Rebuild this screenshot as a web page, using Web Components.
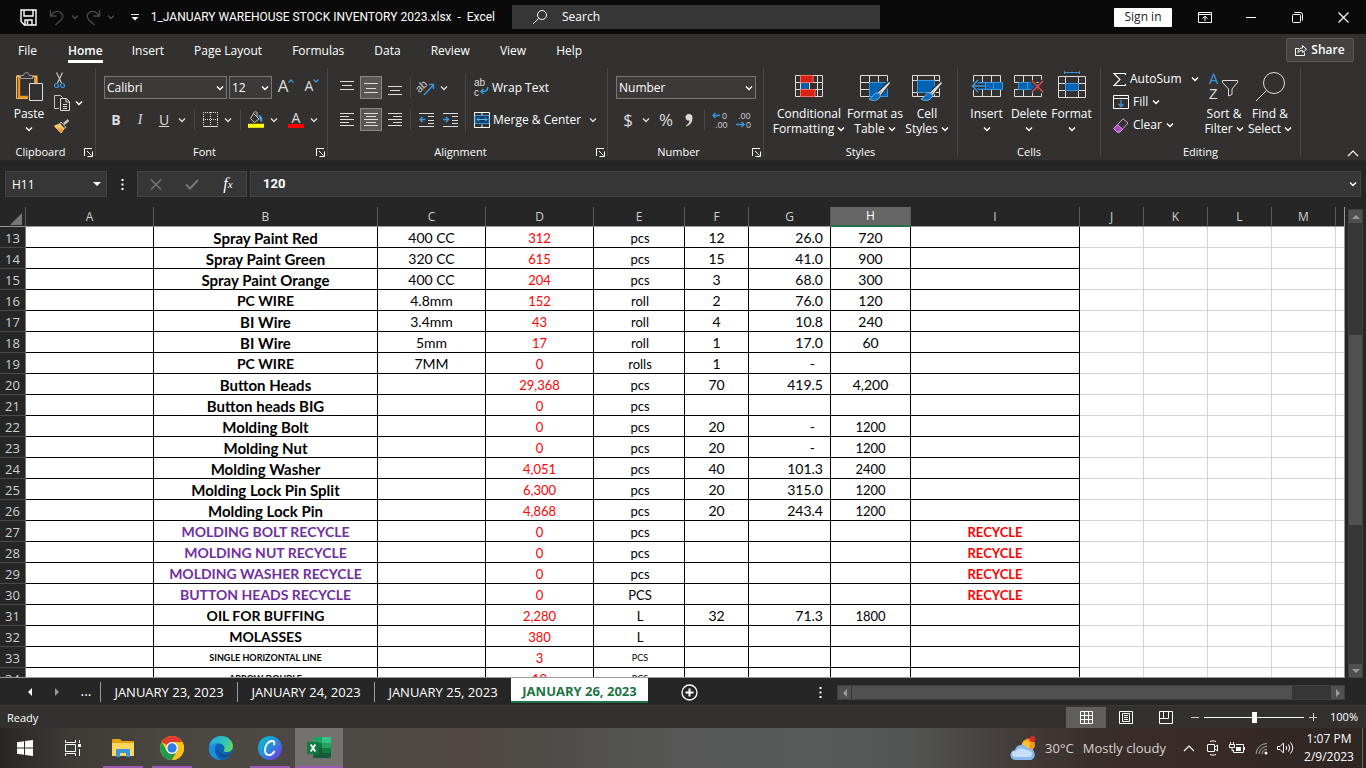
<!DOCTYPE html>
<html lang="en">
<head>
<meta charset="utf-8">
<title>1_JANUARY WAREHOUSE STOCK INVENTORY 2023.xlsx - Excel</title>
<style>
    html, body { margin: 0; height: 100%; }
    body {
        background: #262626;
        color: #fff;
        font: 12px/16px "Open Sans", "Noto Sans", sans-serif;
        overflow: hidden;
    }
</style>
</head>
<body>
<xl-window></xl-window>

<script>
// name: [width, height, markup]; drawn in currentColor unless a colour is set
const ICONS = {
    caret: [8, 6, `<path d="M1 1.5 4 4.5 7 1.5" stroke-width="1.4"/>`],
    save: [17, 17, `<path d="M1 1H16V16H4.5L1 12.5Z M4 1V7H13V1 M5 16V11H12V16 M7.5 12V15" stroke-width="1.4"/>`],
    undo: [16, 17, `<path d="M1.500 1V7H7.500 M1.500 7C4 3 8 1.500 11 3C15 5.500 14 9 12 11L6.500 16" stroke-width="1.300"/>`],
    redo: [16, 17, `<path d="M14.500 1V7H8.500 M14.500 7C12 3 8 1.500 5 3C1 5.500 2 9 4 11L9.500 16" stroke-width="1.300"/>`],
    qat: [8, 8, `<path d="M0 1.500H8"/><path d="M.5 4H7.500L4 7.500Z" fill="currentColor" stroke="none"/>`],
    search: [16, 16, `<circle cx="10" cy="6" r="4.500"/><path d="M6.800 9.200 1 15"/>`],
    ribbonMode: [14, 12, `<path d="M.5 1.500H13.500V11.500H.5Z M.5 3.500H13.500 M7 10V5.500 M4.500 7.500 7 5.200 9.500 7.500"/>`],
    min: [10, 10, `<path d="M0 5.500H10"/>`],
    restore: [11, 11, `<path d="M.5 3.500Q.5 2.500 1.500 2.500H7.500Q8.500 2.500 8.500 3.500V9.500Q8.500 10.500 7.500 10.500H1.500Q.5 10.500.5 9.500Z M2.500.5H8.500Q10.500.5 10.500 2.500V8.500"/>`],
    close: [11, 11, `<path d="M.5.5 10.500 10.500M10.500.5.5 10.500" stroke-width="1.200"/>`],
    share: [12, 12, `<path d="M4 4.500H.5V11.500H9.500V8.500 M3 8.500C3 5.500 5 4 7.500 4V1.500L11.500 5.300 7.500 8.500V6.500C5.500 6.500 4 7 3 8.500Z"/>`],
    paste: [28, 31, `<path d="M5 5H1.500V27.500H13" stroke="#ffc35c"/><path d="M4 6.500V26.500M3 26H13" stroke="#e8912d" stroke-width="2.500"/><path d="M1.500 5.500H21.500V12" stroke="#ffb84d" stroke-width="2"/><path d="M20 7V12" stroke="#e8912d" stroke-width="2"/><path d="M5.500 7.500V4.500H8.500C9 .5 14 .5 14.500 4.500H17.500V7.500Z" fill="#3b3a39" stroke="#9c9a98"/><path d="M14.500 12.500H27.500V29.500H14.500Z" fill="#323130" stroke="#dedcda"/>`],
    cut: [11, 17, `<path d="M2.500.5 7.500 11M8.500.5 3.500 11" stroke="#c8c6c4" stroke-width="1.200"/><circle cx="2.500" cy="13.500" r="2" stroke="#3a96dd" stroke-width="1.200"/><circle cx="8.500" cy="13.500" r="2" stroke="#3a96dd" stroke-width="1.200"/>`],
    copy: [17, 16, `<path d="M5 13.500H.5V.5H6.500L8.500 2.500" stroke="#c8c6c4"/><path d="M6.500 3.500H12.500L15.500 6.500V15.500H6.500Z M12 3.500V7H15.500 M9 9.500H13 M9 11.500H13 M9 13.500H13" stroke="#dedcda"/>`],
    painter: [16, 15, `<path d="M14.500 1 10 5" stroke="#c8c6c4" stroke-width="2.500"/><path d="M7 3 12 8.500 9.500 9.500 5.500 5Z" stroke="#c8c6c4"/><path d="M5.500 5 .5 7 7 14 10 9.500Z" fill="#ffc35c" stroke="#ffd68a"/><path d="M3 9.500 9 10 7 14Z" fill="#e8912d" stroke="none"/>`],
    launch: [9, 9, `<path d="M8 .5H.5V8 M3 3 7.500 7.500 M8.500 3.500V8.500H3.500"/>`],
    border: [15, 15, `<path d="M0 .5H15M.5 0V13M14.500 0V13M0 7.500H15M7.500 0V13" stroke-dasharray="1 1"/><path d="M0 14.500H15"/>`],
    fillColor: [16, 17, `<path d="M6 2.500V1.500C6 .5 9 .5 9 1.500V6M5.500 2.500 11 8 6.500 11.500 2.500 7.500Z" stroke="#c8c6c4"/><path d="M11 4.500C14 5 14.500 8 13.500 11L12 8Z" fill="#6cb4ee" stroke="#3a96dd"/><path d="M0 14.800H16" stroke="#ff0" stroke-width="4"/>`],
    alTop: [14, 16, `<path d="M0 1.500H14M2 5.500H12M0 9.500H14"/>`],
    alMid: [14, 12, `<path d="M0 1.500H14M2 6.500H12M0 10.500H14"/>`],
    alBot: [14, 16, `<path d="M0 6.500H14M2 10.500H12M0 14.500H14"/>`],
    left: [14, 14, `<path d="M0 .5H14M0 3.500H9M0 6.500H14M0 9.500H9M0 12.500H14"/>`],
    center: [14, 14, `<path d="M0 .5H14M2 3.500H12M0 6.500H14M2 9.500H12M0 12.500H14"/>`],
    right: [14, 14, `<path d="M0 .5H14M5 3.500H14M0 6.500H14M5 9.500H14M0 12.500H14"/>`],
    orient: [17, 16, `<text x="-2" y="9" transform="rotate(-45 5 7)" font-size="11" fill="#c8c6c4" stroke="none">ab</text><path d="M6 15 15.500 5M11 4.500H15.500V9" stroke="#3a96dd" stroke-width="1.400"/>`],
    outdent: [15, 14, `<path d="M0 .5H15M9 3.500H15M9 7.500H15M9 10.500H15M0 13.500H15"/><path d="M6.500 6.500H1M3.500 4 1 6.500 3.500 9" stroke="#3a96dd" stroke-width="1.500"/>`],
    indent: [15, 14, `<path d="M0 .5H15M9 3.500H15M9 7.500H15M9 10.500H15M0 13.500H15"/><path d="M0 6.500H5.500M3 4 5.500 6.500 3 9" stroke="#3a96dd" stroke-width="1.500"/>`],
    wrap: [15, 17, `<text x="0" y="7" font-size="10" fill="#dedcda" stroke="none">ab</text><text x="0" y="17" font-size="10" fill="#dedcda" stroke="none">c</text><path d="M13.500 8V10C13.500 12 12 12.500 7 12.500M9.500 10 7 12.500 9.500 15" stroke="#3a96dd" stroke-width="1.500"/>`],
    merge: [16, 16, `<path d="M.5.5H15.500V15.500H.5Z M8 .5V3M8 12.500V15.500"/><path d="M1 3.500H15V11.500H1Z" fill="#0f3f66" stroke="#3a96dd"/><path d="M3 7.500H13M5 5.500 3 7.500 5 9.500M11 5.500 13 7.500 11 9.500" stroke="#6cb4ee"/>`],
    comma: [8, 14, `<path d="M4 1A3.300 3.300 0 1 0 4.500 7.500Q4.500 10.500 1 12.500L1.500 13.500Q7.500 11 7.500 5Q7.500 1 4 1Z" fill="currentColor" stroke="none"/>`],
    incDec: [16, 18, `<text x="10" y="8" font-size="9" fill="#c8c6c4" stroke="none">0</text><text x="3" y="17" font-size="9" fill="#c8c6c4" stroke="none">.00</text><path d="M8 4.500H1M3.500 2 1 4.500 3.500 7" stroke="#3a96dd" stroke-width="1.400"/>`],
    decDec: [16, 18, `<text x="2" y="8" font-size="9" fill="#c8c6c4" stroke="none">.00</text><text x="10" y="17" font-size="9" fill="#c8c6c4" stroke="none">0</text><path d="M0 13.500H8M5.500 11 8 13.500 5.500 16" stroke="#3a96dd" stroke-width="1.400"/>`],
    condFmt: [28, 28, `<path d="M.5 3.500H27.500V24.500H.5Z M.5 10.500H27.500M.5 17.500H27.500M5.500 3V25M14.500 3V25M22.500 3V25"/><path d="M5.500 3.500H18V10.500H5.500ZM5.500 17.500H20V24.500H5.500Z" fill="#d42314" stroke="#ff6b5e"/><path d="M6 11H13.500V17H6Z" fill="#0063b1" stroke="none"/>`],
    fmtTable: [31, 28, `<path d="M.5 3.500H27.500V24.500H.5Z M.5 10.500H27.500M.5 17.500H27.500M9.500 3V25M18.500 3V25"/><path d="M9.500 10.500H27.500V24.500H9.500Z" fill="#0063b1" stroke="#3a96dd"/><path d="M29 11 19 22" stroke="#323130" stroke-width="5"/><path d="M28.500 11.500 18 21.500M29.500 10.500 20 22.500" stroke="#e8e6e4" stroke-width="1.300"/><path d="M18 21C14 20 13.500 25 9 27C14 30 20 28 20.500 23Z" fill="#0f6cbd" stroke="#6cb4ee"/>`],
    cellStyles: [31, 28, `<path d="M.5 3.500H27.500V24.500H.5Z M.5 8.500H27.500M5.500 3V25M22.500 3V25M.5 20.500H27.500"/><path d="M5.500 8.500H22.500V20.500H5.500Z" fill="#0063b1" stroke="#3a96dd"/><path d="M29 11 19 22" stroke="#323130" stroke-width="5"/><path d="M28.500 11.500 18 21.500M29.500 10.500 20 22.500" stroke="#e8e6e4" stroke-width="1.300"/><path d="M18 21C14 20 13.500 25 9 27C14 30 20 28 20.500 23Z" fill="#0f6cbd" stroke="#6cb4ee"/>`],
    insert: [32, 28, `<path d="M2.500 3.500H29.500V10.500H2.500ZM2.500 17.500H29.500V24.500H2.500ZM11.500 3V11M20.500 3V11M11.500 17V25M20.500 17V25"/><path d="M6.500 10.500H31.500V17.500H6.500Z" fill="#0063b1" stroke="#3a96dd"/><path d="M14.500 10V18M22.500 10V18" stroke="#3a96dd"/><path d="M14 14H1.500M7 8 1.500 14 7 20" stroke="#323130" stroke-width="4"/><path d="M14 14H1.500M7 8 1.500 14 7 20" stroke="#3a96dd" stroke-width="1.500"/>`],
    del: [30, 28, `<path d="M.5 3.500H27.500V10.500H.5ZM.5 17.500H27.500V24.500H.5ZM9.500 3V11M18.500 3V11M9.500 17V25M18.500 17V25"/><path d="M4.500 10.500H18L22 14 18 17.500H4.500Z" fill="#0063b1" stroke="#3a96dd"/><path d="M13.500 10V18" stroke="#3a96dd"/><path d="M18 9 29 20M29 9 18 20" stroke="#323130" stroke-width="4"/><path d="M18 9 29 20M29 9 18 20" stroke="#e8484f" stroke-width="1.500"/>`],
    format: [28, 30, `<path d="M.5 5.500H27.500V26.500H.5Z M.5 12.500H27.500M.5 19.500H27.500M7.500 5V27M20.500 5V27"/><path d="M7.500 12.500H20.500V19.500H7.500Z" fill="#0063b1" stroke="#3a96dd"/><path d="M6.500 0V3M21.500 0V3M6.500 1.500H21.500" stroke="#3a96dd"/>`],
    sum: [13, 15, `<path d="M12.500 3V1.500H1L7 7.500 1 13.500H12.500V12" stroke-width="1.100"/>`],
    fill: [16, 14, `<path d="M.5.5H15.500V13.500H.5ZM.5 3.500H15.500"/><path d="M8 5V11.500M5.500 9 8 11.500 10.500 9" stroke="#3a96dd" stroke-width="1.300"/>`],
    clear: [16, 15, `<path d="M10 .8 15 5 7 14H4L.8 10.500Z" stroke="#d59ddb"/><path d="M4.500 6.500 9.500 11 7 14H4L.8 10.500Z" fill="#b146c2" stroke="#d59ddb"/>`],
    sort: [30, 28, `<text x="0" y="12" font-size="14" fill="#3a96dd" stroke="none">A</text><text x="0" y="27" font-size="14" fill="#dedcda" stroke="none">Z</text><path d="M13.500 8.500H28.500V10.500L23 17V22.500L19.500 24V17L13.500 10.500Z"/>`],
    find: [30, 31, `<circle cx="19" cy="12" r="10.500"/><path d="M11.500 19.500 1 30"/>`],
    up: [12, 7, `<path d="M1 6 6 1 11 6" stroke-width="1.200"/>`],
    upBlue: [6, 4, `<path d="M.5 3.500 3 1 5.500 3.500" stroke="#3a96dd" stroke-width="1.300"/>`],
    downBlue: [6, 4, `<path d="M.5.5 3 3 5.500.5" stroke="#3a96dd" stroke-width="1.300"/>`],
    cancel: [12, 11, `<path d="M1 .5 11 10.500M11 .5 1 10.500" stroke-width="1.500"/>`],
    check: [14, 11, `<path d="M1 5.500 5 9.500 13 1" stroke-width="2"/>`],
    dots: [3, 11, `<path d="M.5 0H2.500V2H.5ZM.5 4.500H2.500V6.500H.5ZM.5 9H2.500V11H.5Z" fill="currentColor" stroke="none"/>`],
    triD: [8, 4, `<path d="M0 0H8L4 4Z" fill="currentColor" stroke="none"/>`],
    triU: [8, 4, `<path d="M0 4H8L4 0Z" fill="currentColor" stroke="none"/>`],
    triL: [4, 8, `<path d="M4 0V8L0 4Z" fill="currentColor" stroke="none"/>`],
    triR: [4, 8, `<path d="M0 0V8L4 4Z" fill="currentColor" stroke="none"/>`],
    corner: [12, 12, `<path d="M12 0V12H0Z" fill="#777" stroke="none"/>`],
    plus: [17, 17, `<circle cx="8.500" cy="8.500" r="7.500" stroke-width="1.300"/><path d="M8.500 4.500V12.500M4.500 8.500H12.500" stroke-width="2"/>`],
    normal: [13, 13, `<path d="M.5.5H12.500V12.500H.5ZM4.500 0V13M8.500 0V13M0 4.500H13M0 8.500H13"/>`],
    pageView: [14, 13, `<path d="M.5.5H13.500V12.500H.5ZM3.500 2.500H10.500V10.500H3.500ZM5 4.500H9M5 6.500H9M5 8.500H9"/>`],
    breakView: [14, 13, `<path d="M.5.5H13.500V12.500H.5ZM4.500 0V7.500M9.500 0V7.500M0 7.500H9.500"/>`],
    minus: [8, 8, `<path d="M0 4.500H8"/>`],
    add: [8, 8, `<path d="M0 4.500H8M4.500 0V8"/>`],
    windows: [16, 16, `<path d="M0 2.300 7 1.300V7.600H0ZM8 1.100 16 0V7.600H8ZM0 8.500H7V14.800L0 13.800ZM8 8.500H16V16L8 14.900Z" fill="#fff" stroke="none"/>`],
    taskView: [17, 16, `<path d="M.5 0V2.500H10.500V0M.5 4.500H10.500V11.500H.5ZM.5 16V13.500H10.500V16M14.500 0V3M14.500 9V16"/><path d="M13 4H16V7H13Z" fill="#fff" stroke="none"/>`],
    explorer: [22, 20, `<path d="M0 2Q0 1 1 1H8L10 3H21Q22 3 22 4V18H0Z" fill="#e8a20c" stroke="none"/><path d="M0 5H22V18H0Z" fill="#ffd75e" stroke="none"/><path d="M4 19V12Q4 11 5 11H17Q18 11 18 12V19H14V15H8V19Z" fill="#3a96dd" stroke="none"/>`],
    chrome: [24, 24, `<g stroke="none"><circle cx="12" cy="12" r="12" fill="#fbc116"/><path d="M12 12 1.600 6A12 12 0 0 1 22.400 6Z" fill="#e33b2e"/><path d="M1.600 6A12 12 0 0 0 12 24L17.200 15 12 12 6.800 15Z" fill="#229a4b"/><path d="M12 6H22.400A12 12 0 0 1 12 24L17.200 15Z" fill="#fbc116"/><circle cx="12" cy="12" r="6" fill="#fff"/><circle cx="12" cy="12" r="4.700" fill="#2f7de9"/></g>`],
    edge: [24, 24, `<defs><linearGradient id="e1" x1="0" x2="1" y1=".3" y2=".6"><stop stop-color="#24a9e0"/><stop offset=".6" stop-color="#2fc3c0"/><stop offset="1" stop-color="#63d957"/></linearGradient></defs><g stroke="none"><circle cx="12" cy="12" r="12" fill="#0c63b5"/><path d="M0 11C1 4 6 0 12 0C19 0 24 5 24 10C24 14 21 16 17.500 16C14 16 14.500 14.500 15.500 13C16 9 12 7 8.500 7.500C4 7.500 1 10 0 11Z" fill="url(#e1)"/><path d="M0 12C1 8 5 7 8 8C4.500 11 5 20 12 24C4 24-1 18 0 12Z" fill="#1b8fdc"/><path d="M9.500 10C8 14 11 19 16 19C19 19 21 18 22.500 17C20 22 12 22.500 9.500 18C8 15 8 12 9.500 10Z" fill="#114a8b"/><path d="M24 15C23 17 20 17.500 17 17L22 18.500Z" fill="#4d4c49"/></g>`],
    canva: [24, 24, `<defs><linearGradient id="c1" x1="0" x2="1" y1="0" y2="1"><stop stop-color="#00c4cc"/><stop offset=".5" stop-color="#2a8be0"/><stop offset="1" stop-color="#7d2ae8"/></linearGradient></defs><circle cx="12" cy="12" r="12" fill="url(#c1)" stroke="none"/><path d="M15.500 9C17 8 17 5 14 5C10 5 7 10 7 14C7 17 8.500 19 11 19C13.500 19 15.500 17 16.500 15" stroke="#fff" stroke-width="1.800"/>`],
    excel: [24, 22, `<g stroke="none"><path d="M6 1Q6 0 7 0H15V11H6Z" fill="#21a366"/><path d="M15 0H23Q24 0 24 1V6H15Z" fill="#33c481"/><path d="M15 6H24V11H15Z" fill="#21a366"/><path d="M6 6H15V11H6Z" fill="#107c41"/><path d="M15 11H24V16H15Z" fill="#107c41"/><path d="M6 11H15V21H7Q6 21 6 20Z" fill="#185c37"/><path d="M15 16H24V20Q24 21 23 21H15Z" fill="#185c37"/><path d="M0 5H12V17H0Z" fill="#107c41"/></g><path d="M3.700 7.500 8.300 14.500M8.300 7.500 3.700 14.500" stroke="#fff" stroke-width="1.800"/>`],
    weather: [25, 26, `<g stroke="none"><circle cx="17.500" cy="10" r="6.500" fill="#f7941d"/><circle cx="15" cy="10" r="4" fill="#fdc22e"/><circle cx="21.500" cy="4" r="3" fill="#d42b20"/><path d="M5 25A5 5 0 0 1 4 15A7 7 0 0 1 17 13.500A6 6 0 0 1 20 25Z" fill="#8bb8ee"/><path d="M5 22A4 3 0 0 1 5 16A6 5 0 0 1 15 15A6 4 0 0 1 19 22Z" fill="#c9defa"/></g>`],
    meet: [12, 16, `<path d="M3 1.500Q6 0 9 1.500M3 14.500Q6 16 9 14.500M.5 5Q.5 4.500 1 4.500H7.500V11.500H1Q.5 11.500.5 11ZM8 7 10.500 5V11L8 9"/>`],
    battery: [16, 13, `<path d="M7 2.500H14.500V10.500H4.500V8M15.500 5V8M1.500 0V2M4.500 0V2M.5 2.500H5.500V5.500H.5ZM3 6V8.500H4.500"/><path d="M7 5H12V9H7Z" fill="#fff" stroke="none"/>`],
    wifi: [13, 13, `<path d="M1 12A11 11 0 0 1 12 1.500M4 12A8 8 0 0 1 12 4.500M7 12A5 5 0 0 1 12 7.500" stroke="#aaa"/><circle cx="11" cy="11" r="1.500" fill="#fff" stroke="none"/>`],
    speaker: [17, 14, `<path d="M.5 5.500H3L6.500 2V12L3 8.500H.5ZM9 5Q10.500 7 9 9M11.500 3.500Q14 7 11.500 10.500M13.500 1.500Q18 7 13.500 12.500"/>`]
};

const icon = (name) => {
    const [w, h, body] = ICONS[name];
    return `<svg class="i i-${name}" width="${w}" height="${h}" viewBox="0 0 ${w} ${h}" fill="none" stroke="currentColor" aria-hidden="true">${body}</svg>`;
};

const BASE = `
    *, ::before, ::after { box-sizing: border-box; }
    svg { display: block; flex: none; overflow: visible; font-family: "Liberation Sans", sans-serif; font-weight: 400; }
    button { display: flex; align-items: center; justify-content: center; margin: 0; padding: 0; border: 0; background: none; color: inherit; font: inherit; white-space: nowrap; }
    button:hover { background: #484644; }
    input, select { margin: 0; border: 0; color: inherit; font: inherit; appearance: none; border-radius: 0; outline: none; }
`;

class XlElement extends HTMLElement {
    connectedCallback() {
        if (this.shadowRoot) return;
        this.attachShadow({ mode: 'open' });
        this.shadowRoot.innerHTML = `<style>${BASE}${this.styles()}</style>${this.markup()}`;
    }

    styles() { return ''; }
    markup() { return ''; }
}

class XlWindow extends XlElement {
    styles() {
        return `:host { display: flex; flex-direction: column; height: 100vh; }
            xl-grid { flex: 1; min-height: 0; }`;
    }

    markup() {
        return `<xl-titlebar></xl-titlebar>
            <xl-tabs></xl-tabs>
            <xl-ribbon></xl-ribbon>
            <xl-formula></xl-formula>
            <xl-grid></xl-grid>
            <xl-sheets></xl-sheets>
            <xl-status></xl-status>
            <win-taskbar></win-taskbar>`;
    }
}

class XlTitlebar extends XlElement {
    styles() {
        return `:host { display: flex; align-items: center; height: 34px; background: #0a0a0a; }
            .left { display: flex; align-items: center; flex: 0 1 512px; padding: 0 17px 0 20px; }
            .qat { display: flex; align-items: center; gap: 6px; }
            .qat .save { margin-right: 6px; }
            .qat .more { margin-left: 10px; }
            .dim { color: #4a4a4a; }
            .title { flex: 1; text-align: right; white-space: pre; font-family: Roboto, sans-serif; }
            .search { display: flex; align-items: center; gap: 14px; flex: 0 1 368px; height: 24px; padding-left: 20px; background: #363636; }
            .search input { flex: 1; min-width: 0; padding: 0; background: none; }
            .search input::placeholder { color: #fff; opacity: 1; }
            .right { display: flex; align-items: center; margin-left: auto; }
            .sign { width: 58px; height: 19px; margin-right: 10px; background: #fff; color: #222; border-radius: 1px; }
            .win { width: 46px; height: 34px; }`;
    }

    markup() {
        return `<div class="left">
                <div class="qat">
                    <button class="save" aria-label="Save">${icon('save')}</button>
                    <button class="dim" aria-label="Undo">${icon('undo')}</button>
                    <button class="dim" aria-label="Undo list">${icon('caret')}</button>
                    <button class="dim" aria-label="Redo">${icon('redo')}</button>
                    <button class="dim" aria-label="Redo list">${icon('caret')}</button>
                    <button class="more" aria-label="Customize Quick Access Toolbar">${icon('qat')}</button>
                </div>
                <div class="title">1_JANUARY WAREHOUSE STOCK INVENTORY 2023.xlsx  -  Excel</div>
            </div>
            <label class="search">${icon('search')}<input type="text" placeholder="Search" aria-label="Search"></label>
            <div class="right">
                <button class="sign">Sign in</button>
                <button class="win" aria-label="Ribbon Display Options">${icon('ribbonMode')}</button>
                <button class="win" aria-label="Minimize">${icon('min')}</button>
                <button class="win" aria-label="Restore">${icon('restore')}</button>
                <button class="win" aria-label="Close">${icon('close')}</button>
            </div>`;
    }
}

class XlTabs extends XlElement {
    styles() {
        return `:host { display: flex; align-items: center; height: 32px; padding: 0 12px 0 3px; background: #323130; }
            nav { display: flex; flex: 1; }
            nav button { padding: 0 15px; }
            nav button span { padding: 5px 0 1px; border-bottom: 3px solid transparent; }
            nav .on { padding: 0 14px 0 16px; font-weight: 600; }
            nav .on span { border-color: #fff; }
            .share { gap: 4px; width: 68px; height: 24px; border: 1px solid #5c5a58; border-radius: 2px; background: #454341; font-weight: 600; }`;
    }

    markup() {
        const tabs = ['File', 'Home', 'Insert', 'Page Layout', 'Formulas', 'Data', 'Review', 'View', 'Help'];
        return `<nav>${tabs.map(t => `<button class="${t === 'Home' ? 'on' : ''}"><span>${t}</span></button>`).join('')}</nav>
            <button class="share">${icon('share')}Share</button>`;
    }
}

// One named group of the ribbon: slotted controls above, caption below
class XlGroup extends XlElement {
    styles() {
        return `:host { display: flex; flex-direction: column; flex: none; height: 88px; border-right: 1px solid #484644; }
            .body { display: flex; flex: 1; align-items: flex-start; }
            .cap { display: flex; align-items: center; height: 16px; margin-bottom: -4px; }
            .cap span { flex: 1; text-align: center; font-size: 11px; }
            .cap button { width: 14px; }`;
    }

    markup() {
        const launch = this.hasAttribute('launcher')
            ? `<button aria-label="${this.getAttribute('label')} settings">${icon('launch')}</button>` : '';
        return `<div class="body"><slot></slot></div>
            <div class="cap"><span>${this.getAttribute('label')}</span>${launch}</div>`;
    }
}

// Tall button with a two line caption, e.g. "Format as|Table"
class XlBig extends XlElement {
    styles() {
        return `:host { display: block; flex: none; }
            button { flex-direction: column; justify-content: flex-start; width: 100%; color: #dedcda; }
            .pic { display: flex; align-items: center; height: 36px; margin-bottom: 2px; }
            .line { display: flex; align-items: center; justify-content: center; gap: 3px; height: 15px; color: #fff; }`;
    }

    markup() {
        const [a, b] = this.getAttribute('label').split('|');
        return `<button><span class="pic">${icon(this.getAttribute('icon'))}</span>
            <span class="line">${a}</span><span class="line">${b || ''}${icon('caret')}</span></button>`;
    }
}

class XlSelect extends XlElement {
    styles() {
        return `:host { display: grid; align-items: center; height: 23px; border: 1px solid #797775; background: #3b3a39; }
            select, .i { grid-area: 1 / 1; }
            select { width: 100%; height: 21px; padding: 0 0 0 2px; background: none; }
            option { background: #323130; }
            .i { justify-self: end; margin-right: 2px; pointer-events: none; }`;
    }

    markup() {
        return `<select aria-label="${this.getAttribute('label')}"><option>${this.getAttribute('value')}</option></select>${icon('caret')}`;
    }
}

class XlRibbon extends XlElement {
    styles() {
        return `:host { display: flex; align-items: flex-start; height: 95px; padding-top: 2px; background: #323130; border-bottom: 1px solid #2b2a29; }
            .rows { display: flex; flex-direction: column; gap: 9px; padding-top: 8px; }
            .row { display: flex; align-items: center; height: 23px; }
            .row button { height: 23px; color: #dedcda; }
            .b24 { width: 24px; }
            .b12 { width: 12px; }
            .row .on { background: #5a5856; border: 1px solid #8a8886; width: 22px; margin: 0 1px; }
            .sep { width: 1px; height: 21px; background: #484644; margin: 0 3px; }
            .font .sep { margin-left: 6px; }
            .vsep { width: 1px; height: 58px; margin-top: 6px; background: #484644; }
            .sym { font-size: 14px; }
            .num { font-size: 17px; }
            .pct { width: 22px; margin-left: 3px; }
            .row .txt { color: #fff; gap: 3px; }
            .aa { font-size: 17px; align-items: flex-start; line-height: 20px; }
            .aa .i { margin-top: 3px; }
            .aa.low { font-size: 14px; }
            .fc { flex-direction: column; margin-left: 4px; }
            .fc span { line-height: 13px; font-size: 14px; }
            .fc i { width: 16px; height: 4px; background: #f00; }
            .clip { display: flex; flex-direction: column; gap: 7px; padding-top: 4px; }
            .clip button { height: 16px; gap: 4px; justify-content: flex-start; }
            .edit { display: flex; flex-direction: column; gap: 7px; padding: 3px 0 0 12px; width: 98px; }
            .edit button { height: 16px; justify-content: flex-start; gap: 4px; }
            .edit button:first-child .i-caret { margin-left: auto; }
            .collapse { margin: 82px 7px 0 auto; }`;
    }

    markup() {
        const b = (name, label, cls = 'b24') => `<button class="${cls}" aria-label="${label}">${icon(name)}</button>`;
        const more = (label) => b('caret', label, 'b12');
        return `
        <xl-group label="Clipboard" launcher style="width:96px">
            <xl-big label="Paste" icon="paste" style="width:54px;padding-left:4px"></xl-big>
            <div class="clip">
                ${b('cut', 'Cut', '')}
                <button aria-label="Copy">${icon('copy')}${icon('caret')}</button>
                ${b('painter', 'Format Painter', '')}
            </div>
        </xl-group>
        <xl-group label="Font" launcher style="width:232px">
            <div class="rows font" style="padding-left:8px">
                <div class="row" style="gap:2px">
                    <xl-select label="Font" value="Calibri" style="width:123px"></xl-select>
                    <xl-select label="Font size" value="12" style="width:43px"></xl-select>
                    <button class="b24 aa" aria-label="Increase font size">A${icon('upBlue')}</button>
                    <button class="b24 aa low" aria-label="Decrease font size">A${icon('downBlue')}</button>
                </div>
                <div class="row">
                    <button class="b24 sym"><b>B</b></button>
                    <button class="b24 sym" style="font-family:'Liberation Serif',serif"><i>I</i></button>
                    <button class="b24 sym"><u>U</u></button>${more('Underline styles')}
                    <span class="sep"></span>
                    ${b('border', 'Bottom border')}${more('Borders')}
                    <span class="sep"></span>
                    ${b('fillColor', 'Fill color')}${more('Fill colors')}
                    <button class="b24 fc" aria-label="Font color"><span>A</span><i></i></button>${more('Font colors')}
                </div>
            </div>
        </xl-group>
        <xl-group label="Alignment" launcher style="width:280px">
            <div class="rows" style="padding-left:7px">
                <div class="row">${b('alTop', 'Top align')}${b('alMid', 'Middle align', 'b24 on')}${b('alBot', 'Bottom align')}
                    <span class="sep"></span>${b('orient', 'Orientation')}${more('Orientation list')}</div>
                <div class="row">${b('left', 'Align left')}${b('center', 'Center', 'b24 on')}${b('right', 'Align right')}
                    <span class="sep"></span>${b('outdent', 'Decrease indent')}${b('indent', 'Increase indent')}</div>
            </div>
            <span class="vsep" style="margin-left:3px"></span>
            <div class="rows" style="padding-left:8px">
                <div class="row"><button class="txt">${icon('wrap')}Wrap Text</button></div>
                <div class="row"><button class="txt">${icon('merge')}Merge &amp; Center</button>${b('caret', 'Merge options')}</div>
            </div>
        </xl-group>
        <xl-group label="Number" launcher style="width:156px">
            <div class="rows" style="padding-left:8px">
                <div class="row"><xl-select label="Number format" value="Number" style="width:140px"></xl-select></div>
                <div class="row">
                    <button class="b24 num">$</button>${more('Accounting formats')}
                    <button class="b24 num pct">%</button>
                    ${b('comma', 'Comma style')}
                    <span class="sep"></span>${b('incDec', 'Increase decimal')}${b('decDec', 'Decrease decimal')}
                </div>
            </div>
        </xl-group>
        <xl-group label="Styles" style="width:194px">
            <xl-big label="Conditional|Formatting" icon="condFmt" style="width:72px;margin-left:9px"></xl-big>
            <xl-big label="Format as|Table" icon="fmtTable" style="width:60px"></xl-big>
            <xl-big label="Cell|Styles" icon="cellStyles" style="width:44px"></xl-big>
        </xl-group>
        <xl-group label="Cells" style="width:143px">
            <xl-big label="Insert" icon="insert" style="width:43px;margin-left:7px"></xl-big>
            <xl-big label="Delete" icon="del" style="width:42px"></xl-big>
            <xl-big label="Format" icon="format" style="width:43px"></xl-big>
        </xl-group>
        <xl-group label="Editing" style="width:200px">
            <div class="edit">
                <button>${icon('sum')}AutoSum${icon('caret')}</button>
                <button>${icon('fill')}Fill${icon('caret')}</button>
                <button>${icon('clear')}Clear${icon('caret')}</button>
            </div>
            <xl-big label="Sort &amp;amp;|Filter" icon="sort" style="width:50px"></xl-big>
            <xl-big label="Find &amp;amp;|Select" icon="find" style="width:42px"></xl-big>
        </xl-group>
        <button class="collapse" aria-label="Collapse the ribbon">${icon('up')}</button>`;
    }
}

class XlFormula extends XlElement {
    styles() {
        return `:host { display: flex; align-items: center; height: 46px; padding: 0 5px; background: #262626; }
            .name, .tools, .fx { display: flex; align-items: center; height: 26px; border: 1px solid #444; background: #363636; }
            .name { width: 102px; padding-right: 5px; }
            .name input { flex: 1; min-width: 0; padding: 1px 6px 0; background: none; }
            .sep { display: flex; justify-content: center; width: 30px; }
            .tools { width: 110px; justify-content: space-around; color: #777; }
            .tools button { width: 30px; height: 22px; }
            .tools .f { color: #fff; font: italic 16px/16px "Liberation Serif", serif; }
            .f small { font-size: 11px; }
            .fx { flex: 1; margin-left: 3px; padding-right: 3px; }
            .fx input { flex: 1; min-width: 0; padding: 0 12px; background: none; font: bold 13px/16px Roboto, sans-serif; }`;
    }

    markup() {
        return `<div class="name"><input aria-label="Name Box" value="H11"><button aria-label="Names">${icon('triD')}</button></div>
            <span class="sep">${icon('dots')}</span>
            <div class="tools">
                <button aria-label="Cancel">${icon('cancel')}</button>
                <button aria-label="Enter">${icon('check')}</button>
                <button class="f" aria-label="Insert Function">f<small>x</small></button>
            </div>
            <div class="fx"><input aria-label="Formula Bar" value="120"><button aria-label="Expand Formula Bar">${icon('caret')}</button></div>`;
    }
}

const COLS = [['A', 128], ['B', 224], ['C', 108], ['D', 108], ['E', 91], ['F', 64], ['G', 82], ['H', 80], ['I', 169], ['J', 64], ['K', 64], ['L', 64], ['M', 64]];

// item, size, quantity, unit, F, G, H, remark
const ROWS = [
    ['Spray Paint Red', '400 CC', '312', 'pcs', '12', '26.0', '720', ''],
    ['Spray Paint Green', '320 CC', '615', 'pcs', '15', '41.0', '900', ''],
    ['Spray Paint Orange', '400 CC', '204', 'pcs', '3', '68.0', '300', ''],
    ['PC WIRE', '4.8mm', '152', 'roll', '2', '76.0', '120', ''],
    ['BI Wire', '3.4mm', '43', 'roll', '4', '10.8', '240', ''],
    ['BI Wire', '5mm', '17', 'roll', '1', '17.0', '60', ''],
    ['PC WIRE', '7MM', '0', 'rolls', '1', '-', '', ''],
    ['Button Heads', '', '29,368', 'pcs', '70', '419.5', '4,200', ''],
    ['Button heads BIG', '', '0', 'pcs', '', '', '', ''],
    ['Molding Bolt', '', '0', 'pcs', '20', '-', '1200', ''],
    ['Molding Nut', '', '0', 'pcs', '20', '-', '1200', ''],
    ['Molding Washer', '', '4,051', 'pcs', '40', '101.3', '2400', ''],
    ['Molding Lock Pin Split', '', '6,300', 'pcs', '20', '315.0', '1200', ''],
    ['Molding Lock Pin', '', '4,868', 'pcs', '20', '243.4', '1200', ''],
    ['MOLDING BOLT RECYCLE', '', '0', 'pcs', '', '', '', 'RECYCLE'],
    ['MOLDING NUT RECYCLE', '', '0', 'pcs', '', '', '', 'RECYCLE'],
    ['MOLDING WASHER RECYCLE', '', '0', 'pcs', '', '', '', 'RECYCLE'],
    ['BUTTON HEADS RECYCLE', '', '0', 'PCS', '', '', '', 'RECYCLE'],
    ['OIL FOR BUFFING', '', '2,280', 'L', '32', '71.3', '1800', ''],
    ['MOLASSES', '', '380', 'L', '', '', '', ''],
    ['SINGLE HORIZONTAL LINE', '', '3', 'PCS', '', '', '', ''],
    ['ARROW DOUBLE', '', '10', 'PCS', '', '', '', '']
];

class XlGrid extends XlElement {
    styles() {
        return `:host { display: flex; background: #262626; }
            .view { flex: 1; min-width: 0; overflow: hidden; border-right: 1px solid #999; border-bottom: 1px solid #999; }
            table { width: 100%; table-layout: fixed; border-collapse: separate; border-spacing: 0; }
            th, td { height: 21px; padding: 2px 0 0; overflow: hidden; white-space: nowrap; line-height: 18px; text-align: center; }
            thead th { height: 20px; padding: 0; border-right: 1px solid #5a5a5a; border-bottom: 1px solid #999; background: #262626; color: #d0d0d0; font-weight: 400; line-height: 19px; }
            thead .i { margin: 4px 3px 0 auto; }
            thead .sel { background: #666; color: #fff; border-bottom: 2px solid #217346; line-height: 18px; }
            tbody th { border-right: 1px solid #777; border-bottom: 1px solid #4a4a4a; background: #262626; color: #d0d0d0; font-weight: 400; font-size: 13px; }
            td { border-right: 1px solid #000; border-bottom: 1px solid #000; background: #fff; color: #000; font-family: Lato, sans-serif; font-size: 14px; }
            td.g { border-color: #d4d4d4; }
            td:last-child, thead th:last-child { border-right: 0; }
            .B { font-weight: 700; }
            .B.mixed { font-size: 15px; }
            .D { color: #f00; }
            .D, .E, .I, .H.s { font-size: 13px; }
            .E { padding-left: 2px; }
            .G { padding-right: 7px; text-align: right; }
            .G.dash { padding-right: 15px; }
            .I { color: #f00; font-weight: 700; }
            .rec .B { color: #7030a0; }
            .small .B, .small .E { font-size: 9px; }
            .bar { display: flex; flex-direction: column; width: 15px; margin: 2px 3px 0 3px; border: 1px solid #404040; background: #363636; color: #999; }
            .bar button { width: 13px; height: 13px; background: #505050; }
            .bar i { height: 190px; background: #505050; }
            .bar .a { flex: 112; }
            .bar .b { flex: 139; }`;
    }

    cellClass(col, text, row) {
        if (col === 'G' && text === '-') return 'G dash';
        if (col === 'H' && row >= 22) return 'H s';
        if (col === 'B' && /[a-z]/.test(text)) return 'B mixed';
        return col;
    }

    markup() {
        const head = COLS.map(([c]) => `<th class="${c === 'H' ? 'sel' : ''}" scope="col">${c}</th>`).join('');
        const body = ROWS.map((cells, r) => {
            const n = r + 13;
            const kind = n >= 27 && n <= 30 ? 'rec' : n >= 33 ? 'small' : '';
            const tds = ['', ...cells].map((t, c) => `<td class="${this.cellClass(COLS[c][0], t, n)}">${t}</td>`).join('');
            return `<tr class="${kind}"><th scope="row">${n}</th>${tds}${'<td class="g"></td>'.repeat(5)}</tr>`;
        }).join('');
        return `<div class="view"><table>
                <colgroup><col style="width:26px">${COLS.map(([, w]) => `<col style="width:${w}px">`).join('')}<col></colgroup>
                <thead><tr><th aria-label="Select all">${icon('corner')}</th>${head}<th></th></tr></thead>
                <tbody>${body}</tbody>
            </table></div>
            <div class="bar">
                <button aria-label="Scroll up">${icon('triU')}</button><span class="a"></span><i></i><span class="b"></span>
                <button aria-label="Scroll down">${icon('triD')}</button>
            </div>`;
    }
}

class XlSheets extends XlElement {
    styles() {
        return `:host { display: flex; align-items: flex-start; height: 28px; padding-right: 21px; background: #262626; border-bottom: 1px solid #3a3938; }
            .nav { display: flex; align-items: center; width: 100px; height: 28px; padding-left: 20px; }
            .nav button { width: 27px; height: 20px; }
            .nav button:first-child { width: 20px; }
            .nav button:nth-child(2) { width: 34px; color: #999; }
            .nav button:last-child { padding-bottom: 2px; font-size: 14px; width: 24px; }
            .tab { width: 137px; height: 20px; margin-top: 4px; border-left: 1px solid #999; font-size: 13px; }
            .tab.on { height: 25px; margin-top: 0; padding-top: 2px; border: 0; border-bottom: 2px solid #217346; background: #fff; color: #217346; font-weight: 700; }
            .new { width: 30px; height: 28px; margin-left: 26px; }
            .grip { margin: 9px 15px 0 auto; }
            .bar { display: flex; flex: 0 1 508px; height: 15px; margin-top: 7px; border: 1px solid #404040; background: #363636; color: #999; }
            .bar button { width: 13px; background: #505050; }
            .bar i { flex: 440; margin-left: 1px; background: #505050; }
            .bar span { flex: 39; }`;
    }

    markup() {
        const tabs = [23, 24, 25, 26].map(d => `<button class="tab ${d === 26 ? 'on' : ''}">JANUARY ${d}, 2023</button>`).join('');
        return `<div class="nav">
                <button aria-label="Previous sheet">${icon('triL')}</button>
                <button aria-label="Next sheet">${icon('triR')}</button>
                <button aria-label="More sheets">...</button>
            </div>
            ${tabs}
            <button class="new" aria-label="New sheet">${icon('plus')}</button>
            <span class="grip">${icon('dots')}</span>
            <div class="bar"><button aria-label="Scroll left">${icon('triL')}</button><i></i><span></span><button aria-label="Scroll right">${icon('triR')}</button></div>`;
    }
}

class XlStatus extends XlElement {
    styles() {
        return `:host { display: flex; align-items: center; height: 22px; padding: 0 8px 0 7px; background: #323130; font-size: 11px; }
            .ready { flex: 1; padding-top: 2px; }
            .view { width: 40px; height: 21px; }
            .view.on { background: #605e5c; }
            .zoom { width: 18px; height: 20px; color: #ccc; }
            input { width: 100px; height: 16px; padding: 0; background: linear-gradient(#fff, #fff) center / 100% 1px no-repeat; }
            input::-webkit-slider-thumb { appearance: none; width: 5px; height: 11px; background: #fff; border: 0; }
            .pct { min-width: 36px; text-align: right; }`;
    }

    markup() {
        return `<span class="ready">Ready</span>
            <button class="view on" aria-label="Normal">${icon('normal')}</button>
            <button class="view" aria-label="Page Layout">${icon('pageView')}</button>
            <button class="view" aria-label="Page Break Preview">${icon('breakView')}</button>
            <button class="zoom" aria-label="Zoom out">${icon('minus')}</button>
            <input type="range" min="10" max="190" value="100" aria-label="Zoom">
            <button class="zoom" aria-label="Zoom in">${icon('add')}</button>
            <span class="pct">100%</span>`;
    }
}

class WinTaskbar extends XlElement {
    styles() {
        return `:host { display: flex; height: 40px; background: linear-gradient(90deg, #2a2522 0, #3d3a36 5%, #4a4743 12%, #4d4a45 25%, #4f4741 34%, #4e4c47 40%, #575857 50%, #565a59 60%, #545655 66%, #45403d 73%, #3a2e2b 80%, #362926 90%, #2e2523 100%); }
            .app { width: 49px; height: 40px; }
            .app span { display: flex; align-items: center; justify-content: center; width: 40px; height: 40px; border-bottom: 2px solid transparent; border-top: 2px solid transparent; }
            .run span { border-bottom-color: #9b59b6; }
            .on span { width: 48px; background: #74726f; border-top-color: #74726f; }
            .tray { display: flex; align-items: center; margin-left: auto; padding-right: 3px; }
            .weather { gap: 9px; margin-right: 11px; font-size: 13px; color: #d6d2d0; }
            .ic { width: 24px; height: 40px; }
            .clock { flex-direction: column; width: 56px; margin-left: 4px; line-height: 18px; }
            .desk { width: 1px; height: 40px; background: #6a6360; margin-left: 5px; }`;
    }

    markup() {
        const apps = [['windows', 'Start', ''], ['taskView', 'Task View', ''], ['explorer', 'File Explorer', 'run'], ['chrome', 'Chrome', 'run'], ['edge', 'Edge', ''], ['canva', 'Canva', 'run'], ['excel', 'Excel', 'run on']];
        const tray = [['up', 'Show hidden icons'], ['meet', 'Meet Now'], ['battery', 'Battery'], ['wifi', 'Network'], ['speaker', 'Volume']];
        return apps.map(([n, l, c]) => `<button class="app ${c}" aria-label="${l}"><span>${icon(n)}</span></button>`).join('') + `
            <div class="tray">
                <button class="weather">${icon('weather')}<span>30°C</span><span>Mostly cloudy</span></button>
                ${tray.map(([n, l]) => `<button class="ic" aria-label="${l}">${icon(n)}</button>`).join('')}
                <button class="clock"><span>1:07 PM</span><span>2/9/2023</span></button>
                <span class="desk"></span>
            </div>`;
    }
}

customElements.define('xl-select', XlSelect);
customElements.define('xl-group', XlGroup);
customElements.define('xl-big', XlBig);
customElements.define('xl-titlebar', XlTitlebar);
customElements.define('xl-tabs', XlTabs);
customElements.define('xl-ribbon', XlRibbon);
customElements.define('xl-formula', XlFormula);
customElements.define('xl-grid', XlGrid);
customElements.define('xl-sheets', XlSheets);
customElements.define('xl-status', XlStatus);
customElements.define('win-taskbar', WinTaskbar);
customElements.define('xl-window', XlWindow);
</script>
</body>
</html>
